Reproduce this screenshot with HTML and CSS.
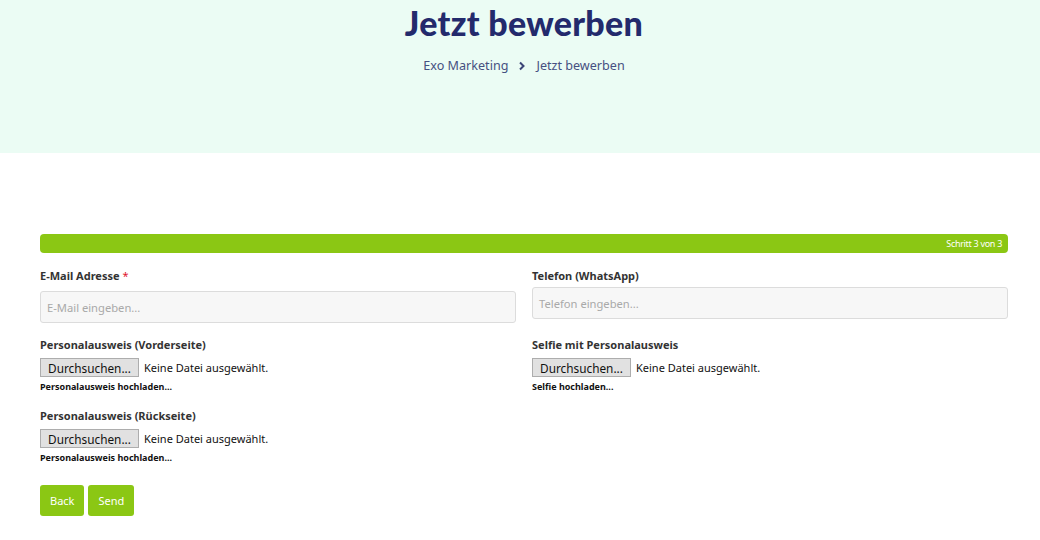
FILE: index.html
```html
<!DOCTYPE html>
<html lang="de">
<head>
<meta charset="utf-8">
<title>Jetzt bewerben</title>
<link rel="stylesheet" href="styles.css">
</head>
<body>
<header class="hero">
  <h1 class="hero-title">Jetzt bewerben</h1>
  <nav class="crumbs">
    <span>Exo Marketing</span>
    <svg class="crumb-sep" width="8" height="10" viewBox="0 0 8 10"><path d="M2 1.5 L5.5 5 L2 8.5" fill="none" stroke="#3c4677" stroke-width="2"/></svg>
    <span>Jetzt bewerben</span>
  </nav>
</header>
<main class="content">
  <div class="progress"><span>Schritt 3 von 3</span></div>
  <div class="grid">
    <div class="field">
      <div class="label label-req">E-Mail Adresse <span class="req">*</span></div>
      <div class="input">E-Mail eingeben...</div>
    </div>
    <div class="field">
      <div class="label label-tight">Telefon (WhatsApp)</div>
      <div class="input">Telefon eingeben...</div>
    </div>
    <div class="field">
      <div class="label">Personalausweis (Vorderseite)</div>
      <div class="file"><span class="file-btn">Durchsuchen...</span><span class="file-name">Keine Datei ausgewählt.</span></div>
      <div class="hint">Personalausweis hochladen...</div>
    </div>
    <div class="field">
      <div class="label">Selfie mit Personalausweis</div>
      <div class="file"><span class="file-btn">Durchsuchen...</span><span class="file-name">Keine Datei ausgewählt.</span></div>
      <div class="hint">Selfie hochladen...</div>
    </div>
    <div class="field">
      <div class="label">Personalausweis (Rückseite)</div>
      <div class="file"><span class="file-btn">Durchsuchen...</span><span class="file-name">Keine Datei ausgewählt.</span></div>
      <div class="hint">Personalausweis hochladen...</div>
    </div>
  </div>
  <div class="actions">
    <button class="btn">Back</button>
    <button class="btn">Send</button>
  </div>
</main>
</body>
</html>
```
FILE: styles.css
```css
* { box-sizing: border-box; }
body {
  margin: 0;
  background: #fff;
  font-family: "Noto Sans", "Open Sans", sans-serif;
  color: #333;
}
.hero {
  background: #ebfcf4;
  height: 153px;
  display: flex;
  flex-direction: column;
  align-items: center;
  padding-top: 1px;
  padding-left: 8px;
}
.hero-title {
  margin: 0;
  font-family: Lato, "Noto Sans", sans-serif;
  font-weight: 900;
  font-size: 34px;
  line-height: 44px;
  color: #232a6c;
  letter-spacing: 0.3px;
}
.crumbs {
  margin-top: 12px;
  display: flex;
  align-items: center;
  gap: 10px;
  font-family: "Noto Sans", sans-serif;
  font-size: 12.6px;
  color: #465081;
}
.content {
  padding: 81px 32px 0 40px;
}
.progress {
  height: 19px;
  background: #8bc714;
  border-radius: 4px;
  display: flex;
  justify-content: flex-end;
  align-items: center;
  padding-right: 6px;
  font-size: 9px;
  color: #fff;
  letter-spacing: -0.3px;
}
.grid {
  display: grid;
  grid-template-columns: 476px 476px;
  column-gap: 16px;
  margin-top: 15px;
}
.field { padding-bottom: 14px; }
.label {
  font-size: 11px;
  font-weight: 700;
  line-height: 16px;
  color: #333;
  margin-bottom: 5px;
}
.label-req { margin-bottom: 7px; }
.label-tight { margin-bottom: 3px; }
.req { color: #e0142c; font-weight: 400; }
.input {
  height: 32px;
  background: #f7f7f7;
  border: 1px solid #dcdcdc;
  border-radius: 3px;
  padding: 0 6px;
  display: flex;
  align-items: center;
  font-size: 11.2px;
  color: #a9a9a9;
}
.file {
  display: flex;
  align-items: center;
  gap: 5px;
  height: 19px;
}
.file-btn {
  display: inline-flex;
  align-items: center;
  justify-content: center;
  width: 99px;
  height: 19px;
  background: #e1e1e1;
  border: 1px solid #adadad;
  font-size: 11.8px;
  color: #111;
}
.file-name { font-size: 11px; color: #111; }
.hint {
  margin-top: 4px;
  margin-bottom: 1px;
  font-size: 9px;
  font-weight: 700;
  color: #111;
  line-height: 12px;
}
.actions {
  display: flex;
  gap: 4px;
  margin-top: 6px;
}
.btn {
  height: 31px;
  padding: 0 10px;
  background: #8bc714;
  border: 0;
  border-radius: 3px;
  color: #fff;
  font-family: "Noto Sans", sans-serif;
  font-size: 11px;
}
```
